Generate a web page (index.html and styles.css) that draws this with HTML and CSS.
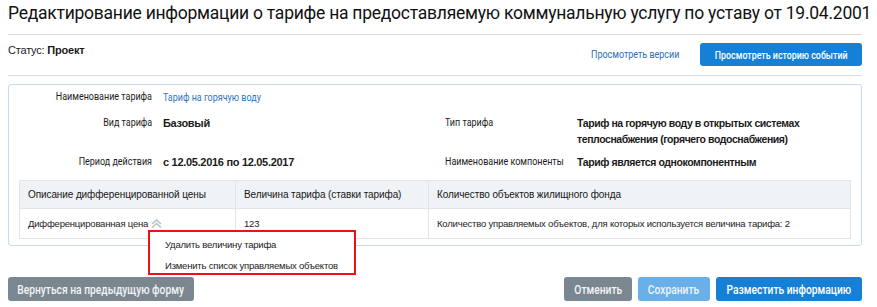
FILE: index.html
```html
<!DOCTYPE html>
<html lang="ru">
<head>
<meta charset="utf-8">
<title>Редактирование информации о тарифе</title>
<link rel="stylesheet" href="styles.css">
</head>
<body>
<div class="page">
  <h1 class="title">Редактирование информации о тарифе на предоставляемую коммунальную услугу по уставу от 19.04.2001</h1>
  <div class="status-bar">
    <div class="status">Статус: <b>Проект</b></div>
    <div class="status-actions">
      <a class="link" href="#"><span class="cn cn-r">Просмотреть версии</span></a>
      <button class="btn btn-primary btn-top"><span class="btxt btxt-top">Просмотреть историю событий</span></button>
    </div>
  </div>
  <div class="panel">
    <div class="info">
      <div class="lbl r1"><span class="cn cn-r">Наименование тарифа</span></div>
      <div class="val r1"><a class="vlink" href="#"><span class="cn cn-l">Тариф на горячую воду</span></a></div>
      <div class="lbl2 r1"></div>
      <div class="val2 r1"></div>

      <div class="lbl r2"><span class="cn cn-r">Вид тарифа</span></div>
      <div class="val strong r2">Базовый</div>
      <div class="lbl2 r2"><span class="cn cn-l">Тип тарифа</span></div>
      <div class="val2 strong r2">Тариф на горячую воду в открытых системах теплоснабжения (горячего водоснабжения)</div>

      <div class="lbl r3"><span class="cn cn-r">Период действия</span></div>
      <div class="val strong r3">с 12.05.2016 по 12.05.2017</div>
      <div class="lbl2 r3"><span class="cn cn-l">Наименование компоненты</span></div>
      <div class="val2 strong r3">Тариф является однокомпонентным</div>
    </div>
    <table class="grid">
      <thead>
        <tr>
          <th class="c1">Описание дифференцированной цены</th>
          <th class="c2">Величина тарифа (ставки тарифа)</th>
          <th class="c3">Количество объектов жилищного фонда</th>
        </tr>
      </thead>
      <tbody>
        <tr>
          <td class="c1">
            <span class="cell-menu">Дифференцированная цена<svg class="chev" width="11" height="9" viewBox="0 0 11 9"><path d="M1 5 L5.5 1 L10 5 M1 8.5 L5.5 4.5 L10 8.5" fill="none" stroke="#b9c0c6" stroke-width="1.6"/></svg><span class="menu">
                <span class="menu-item">Удалить величину тарифа</span>
                <span class="menu-item">Изменить список управляемых объектов</span>
              </span>
            </span>
          </td>
          <td class="c2">123</td>
          <td class="c3">Количество управляемых объектов, для которых используется величина тарифа: 2</td>
        </tr>
      </tbody>
    </table>
  </div>
  <div class="footer">
    <button class="btn btn-gray w-back"><span class="btxt">Вернуться на предыдущую форму</span></button>
    <div class="footer-right">
      <button class="btn btn-gray w-cancel"><span class="btxt">Отменить</span></button>
      <button class="btn btn-light w-save"><span class="btxt">Сохранить</span></button>
      <button class="btn btn-primary w-post"><span class="btxt">Разместить информацию</span></button>
    </div>
  </div>
</div>
</body>
</html>
```

FILE: styles.css
```css
* { box-sizing: border-box; }
html, body { margin: 0; padding: 0; background: #fff; }
body {
  font-family: "Liberation Sans", Arial, sans-serif;
  font-size: 11px;
  color: #1b1b1b;
}
.page {
  width: 854px;
  margin-left: 8px;
}
.title {
  margin: 0;
  padding-top: 2px;
  height: 35px;
  font-family: Roboto, "Liberation Sans", sans-serif;
  font-weight: 400;
  font-size: 17.5px;
  letter-spacing: -0.25px;
  line-height: 22px;
  color: #111;
  white-space: nowrap;
  border-bottom: 1px solid #d9dce3;
}
.status-bar {
  height: 41px;
  border-bottom: 1px solid #d9dce3;
  display: flex;
  justify-content: space-between;
  align-items: flex-start;
}
.status {
  padding-top: 8px;
  line-height: 14px;
  letter-spacing: -0.2px;
}
.status b { font-weight: bold; }
.status-actions {
  display: flex;
  align-items: center;
  padding-top: 8px;
}
.link {
  font-family: Roboto, "Liberation Sans", sans-serif;
  font-size: 11px;
  color: #2c6fb3;
  text-decoration: none;
  margin-right: 21px;
}
/* condensed text */
.cn {
  display: inline-block;
  transform: scaleX(0.815);
  white-space: nowrap;
}
.cn-r { transform-origin: right center; }
.cn-l { transform-origin: left center; }

.btn {
  font-family: Roboto, "Liberation Sans", sans-serif;
  border: 0;
  border-radius: 3px;
  color: #fff;
  font-size: 13px;
  font-weight: 500;
  height: 24px;
  padding: 0;
  white-space: nowrap;
  display: flex;
  align-items: center;
  justify-content: center;
  cursor: pointer;
}
.btxt {
  display: inline-block;
  transform: scaleX(0.79);
}
.btn-top {
  height: 23px;
  width: 162px;
  font-size: 11.5px;
}
.btxt-top { transform: scaleX(0.77); }
.w-back { width: 186px; }
.w-cancel { width: 68px; }
.w-save { width: 72px; }
.w-post { width: 146px; }
.btn-primary { background: #1580d6; }
.btn-gray { background: #7a8791; color: #f2f4f6; }
.btn-light { background: #6aafe8; color: #eef6fd; }

.panel {
  margin-top: 8px;
  border: 1px solid #c3dcf0;
  border-radius: 3px;
  padding: 0 10px 6px 10px;
}
.info {
  display: grid;
  grid-template-columns: 144px 282px 132px 1fr;
  line-height: 16px;
}
.lbl, .lbl2, .vlink {
  font-family: Roboto, "Liberation Sans", sans-serif;
  font-size: 11px;
  white-space: nowrap;
  color: #1c1c1c;
}
.lbl {
  text-align: right;
  padding-right: 11px;
}
.strong {
  font-weight: bold;
  font-size: 11px;
  letter-spacing: -0.3px;
}
.val2.strong {
  font-size: 10.5px;
  letter-spacing: -0.42px;
}
.vlink {
  color: #2f76bd;
  text-decoration: none;
}
.r1 { padding-top: 4px; padding-bottom: 9px; }
.r2 { padding-bottom: 7px; }
.r3 { padding-bottom: 10px; }

.grid {
  width: 100%;
  border-collapse: collapse;
  font-size: 10px;
  letter-spacing: -0.1px;
  table-layout: fixed;
}
.grid th, .grid td {
  border: 1px solid #e1e5ea;
  text-align: left;
  padding: 0 8px;
  vertical-align: middle;
  white-space: nowrap;
}
.grid th {
  background: #f0f3f6;
  height: 28px;
  font-weight: normal;
  color: #161616;
}
.grid td {
  height: 30px;
  font-size: 9.5px;
  letter-spacing: -0.2px;
  color: #222;
}
.grid .c1 { width: 216px; }
.grid .c2 { width: 193px; }

.cell-menu { position: relative; display: inline-block; }
.chev { vertical-align: -1px; margin-left: 3px; }
.menu {
  position: absolute;
  left: 120px;
  top: 12px;
  width: 208px;
  height: 45px;
  background: #fff;
  border: 2px solid #ee1111;
  padding: 2px 0 0 15px;
  z-index: 5;
  display: flex;
  flex-direction: column;
}
.menu-item {
  font-size: 9.5px;
  letter-spacing: -0.2px;
  line-height: 21px;
  white-space: nowrap;
  color: #1a1a1a;
}

.footer {
  margin-top: 31px;
  display: flex;
  justify-content: space-between;
}
.footer-right { display: flex; gap: 6px; }
```
